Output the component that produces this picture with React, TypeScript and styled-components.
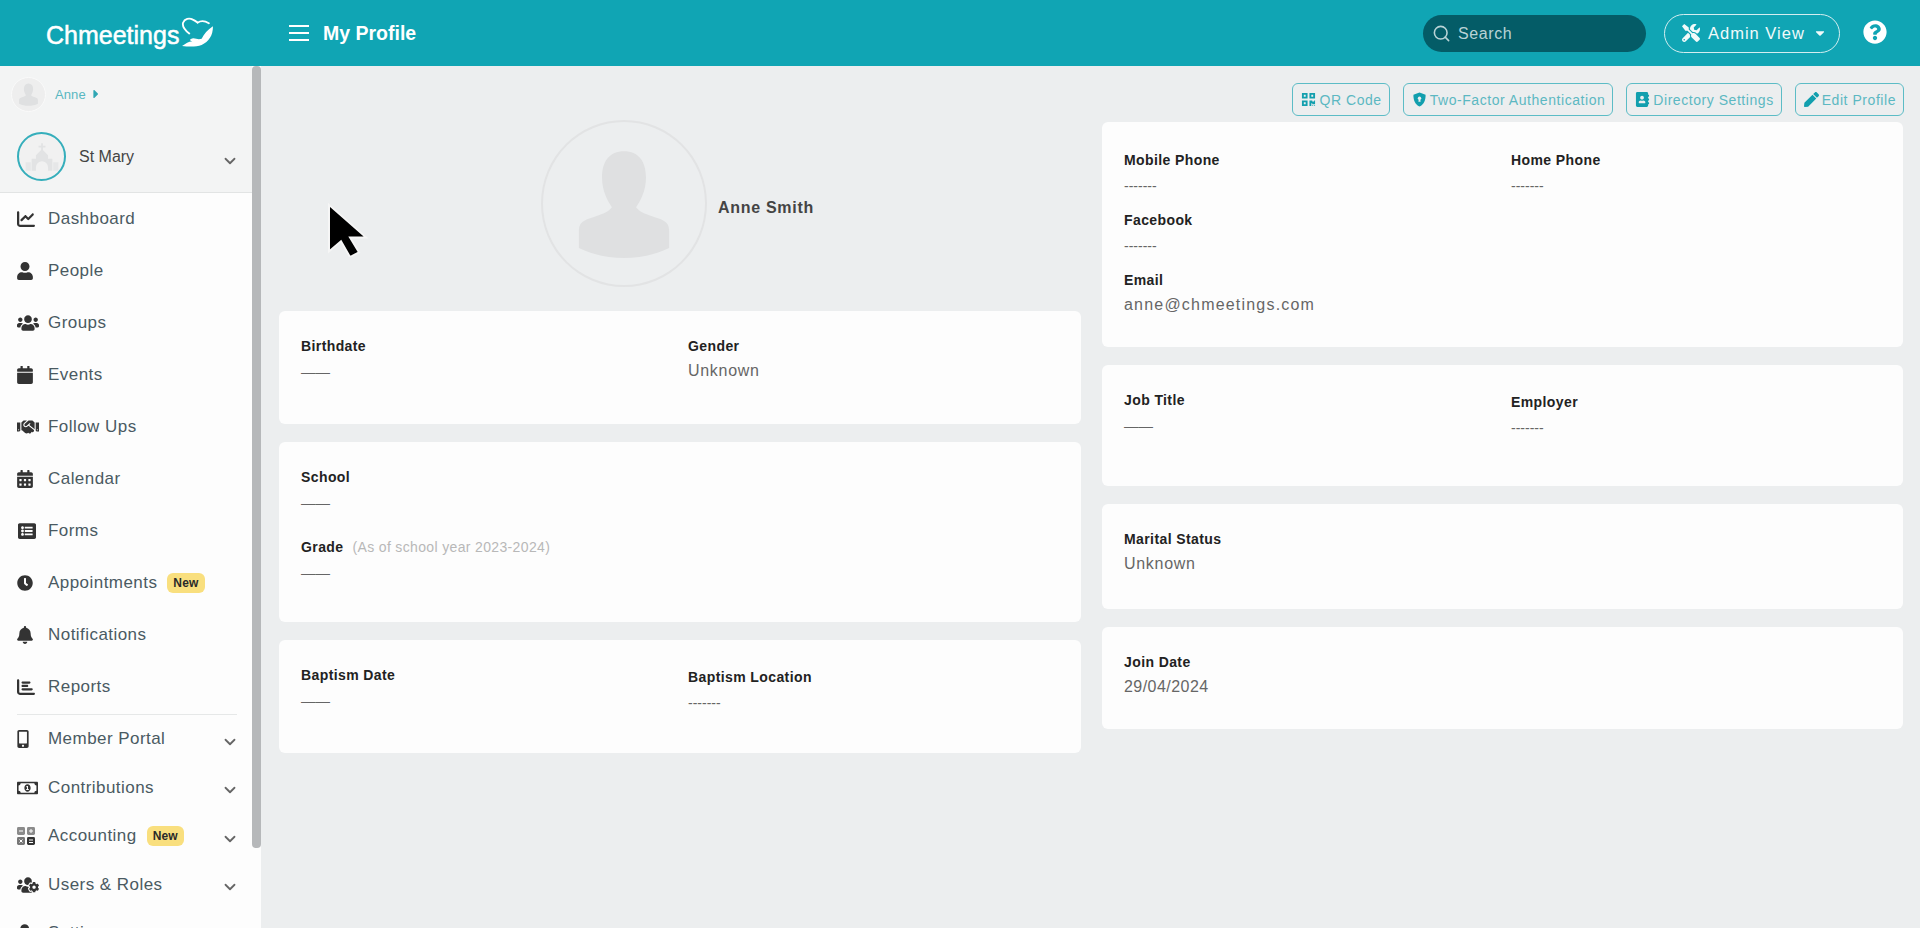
import React from 'react';
import styled, { createGlobalStyle } from 'styled-components';
import {
  FaUser, FaUsers, FaCalendar, FaHandshake, FaCalendarAlt, FaListAlt, FaClock, FaBell,
  FaMobileAlt, FaRegMoneyBillAlt, FaUsersCog, FaUserCog, FaTools, FaCaretDown, FaCaretRight,
  FaQuestionCircle, FaAddressBook, FaPen, FaQrcode,
} from 'react-icons/fa';
import { FaChartBar, FaChartLine } from 'react-icons/fa6';
import { FiSearch, FiChevronDown } from 'react-icons/fi';

const Global = createGlobalStyle`
  html, body { margin: 0; padding: 0; height: 928px; overflow: hidden; background: #eceeef; }
  * { box-sizing: border-box; }
  body { font-family: "Liberation Sans", Arial, sans-serif; }
`;

const Page = styled.div`
  position: relative;
  width: 1920px;
  height: 928px;
  overflow: hidden;
  display: flex;
  flex-direction: column;
`;

const Header = styled.header`
  height: 66px;
  flex: none;
  background: #10a5b4;
  display: flex;
  align-items: center;
  color: #fff;
`;

const Logo = styled.div`
  width: 289px;
  padding-left: 46px;
  display: flex;
  align-items: center;
  gap: 2px;
`;

const LogoText = styled.span`
  font-size: 25px;
  font-weight: 400;
  -webkit-text-stroke: 0.5px #fff;
  margin-top: 5px;
`;

const Burger = styled.button`
  width: 20px;
  height: 16px;
  padding: 0;
  border: none;
  background: none;
  display: flex;
  flex-direction: column;
  justify-content: space-between;
  margin-right: 14px;
  span { display: block; height: 2px; background: #fff; }
`;

const PageTitle = styled.h1`
  margin: 0;
  font-size: 19.5px;
  font-weight: 700;
  color: #fff;
`;

const HeaderRight = styled.div`
  margin-left: auto;
  display: flex;
  align-items: center;
  padding-right: 33px;
`;

const Search = styled.div`
  width: 223px;
  height: 37px;
  border-radius: 19px;
  background: #045c67;
  display: flex;
  align-items: center;
  padding-left: 9px;
  gap: 7px;
  color: #b9d3d6;
  font-size: 16px;
  letter-spacing: 0.6px;
`;

const SearchText = styled.span`
  margin-top: 2px;
`;

const AdminButton = styled.div`
  width: 176px;
  height: 39px;
  margin-left: 18px;
  border: 1px solid #d3eef0;
  border-radius: 20px;
  display: flex;
  align-items: center;
  padding-left: 17px;
  gap: 8px;
  font-size: 16.5px;
  letter-spacing: 1px;
  color: #f1fafa;
`;

const AdminText = styled.span`
  margin-top: 1px;
`;

const HelpIcon = styled(FaQuestionCircle)`
  margin: -2px 0 0 23px;
  width: 24px;
  height: 24px;
  color: #fff;
`;

const Body = styled.div`
  flex: 1;
  display: flex;
  min-height: 0;
`;

const Sidebar = styled.aside`
  width: 261px;
  flex: none;
  display: flex;
  background: #fdfdfd;
  overflow: hidden;
`;

const SideContent = styled.div`
  width: 252px;
  flex: none;
`;

const ScrollThumb = styled.div`
  width: 9px;
  height: 782px;
  background: #b6b8ba;
  border-radius: 4px;
`;

const SideTop = styled.div`
  height: 127px;
  background: #f3f4f4;
  border-bottom: 1px solid #e2e4e4;
`;

const UserRow = styled.div`
  height: 46px;
  padding: 10px 0 0 11px;
  display: flex;
  align-items: center;
  gap: 9px;
  color: #58b7c1;
  font-size: 13px;
  letter-spacing: 0.1px;
`;

const UserAvatar = styled.div`
  width: 35px;
  height: 35px;
  border-radius: 50%;
  background: #eeeeee;
  border: 1px solid #fafafa;
  display: flex;
  align-items: center;
  justify-content: center;
`;

const UserCaret = styled(FaCaretRight)`
  margin-left: -6px;
  width: 14px;
  height: 14px;
  color: #2fa6b3;
`;

const ChurchRow = styled.div`
  display: flex;
  align-items: center;
  padding: 20px 15px 0 17px;
  gap: 13px;
  font-size: 16px;
  color: #444;
`;

const ChurchAvatar = styled.div`
  width: 49px;
  height: 49px;
  border-radius: 50%;
  border: 2px solid #35aebb;
  background: #f1f1f1;
  display: flex;
  align-items: center;
  justify-content: center;
`;

const Chevron = styled(FiChevronDown)<{ $drop: number }>`
  margin-left: auto;
  margin-right: -2px;
  width: 18px;
  height: 18px;
  color: #666;
  stroke-width: 2.4;
  margin-top: ${p => p.$drop}px;
  flex: none;
`;

const NavList = styled.nav`
  display: flex;
  flex-direction: column;
`;

const NavRow = styled.a<{ $height: number }>`
  height: ${p => p.$height}px;
  flex: none;
  display: flex;
  align-items: center;
  padding: 0 15px 0 17px;
  font-size: 17px;
  letter-spacing: 0.45px;
  color: #4a5a62;
  white-space: nowrap;
`;

const NavIcon = styled.span<{ $width: number }>`
  width: 31px;
  flex: none;
  display: flex;
  align-items: center;
  svg { width: ${p => p.$width}px; height: 18px; color: #333; }
`;

const NewBadge = styled.span`
  margin-left: 10px;
  background: #f9df7e;
  color: #2a2a2a;
  font-size: 12px;
  font-weight: 700;
  letter-spacing: 0.2px;
  height: 20px;
  line-height: 20px;
  padding: 0 6px;
  border-radius: 6px;
`;

const Divider = styled.hr`
  margin: 1px 15px 0 17px;
  border: none;
  border-top: 1px solid #e6e8e8;
  height: 0;
  flex: none;
`;

const Main = styled.main`
  flex: 1;
  display: grid;
  grid-template-columns: 802px 801px;
  column-gap: 21px;
  padding-left: 18px;
  align-content: start;
`;

const Column = styled.div`
  display: flex;
  flex-direction: column;
  gap: 18px;
`;

const Hero = styled.div`
  height: 227px;
  padding: 54px 0 0 262px;
  display: flex;
  align-items: flex-start;
  gap: 11px;
`;

const BigAvatar = styled.div`
  width: 166px;
  height: 167px;
  border-radius: 50%;
  border: 2px solid #e2e3e4;
  display: flex;
  align-items: center;
  justify-content: center;
  flex: none;
`;

const HeroName = styled.div`
  margin-top: 79px;
  font-size: 16px;
  font-weight: 700;
  letter-spacing: 0.7px;
  color: #444;
`;

const Toolbar = styled.div`
  display: flex;
  justify-content: flex-end;
  gap: 13px;
  padding-top: 17px;
  margin-bottom: -12px;
  height: 50px;
  margin-right: -1px;
`;

const ToolButton = styled.a`
  height: 33px;
  border: 1px solid #5cbcc6;
  border-radius: 6px;
  padding: 0 7px 0 8px;
  display: flex;
  align-items: center;
  gap: 3px;
  color: #5cb8c2;
  font-size: 14px;
  letter-spacing: 0.55px;
  white-space: nowrap;
  svg { width: 15px; height: 15px; color: #129fae; }
`;

const Card = styled.section<{ $height: number; $top?: number; $rowGap?: number }>`
  height: ${p => p.$height}px;
  background: #fdfdfd;
  border-radius: 6px;
  padding: ${p => p.$top ?? 26}px 22px 0;
  display: grid;
  grid-template-columns: 387px 1fr;
  align-content: start;
  row-gap: ${p => p.$rowGap ?? 18}px;
`;

const Field = styled.div<{ $wide?: boolean; $shift?: number }>`
  ${p => (p.$wide ? 'grid-column: 1 / -1;' : '')}
  margin-top: ${p => p.$shift ?? 0}px;
`;

const Label = styled.div`
  font-size: 14px;
  line-height: 18px;
  font-weight: 700;
  color: #222;
  letter-spacing: 0.4px;
`;

const Hint = styled.span`
  margin-left: 9px;
  font-weight: 400;
  color: #b8b8b8;
  letter-spacing: 0.35px;
`;

const Value = styled.div<{ $spacing?: number }>`
  margin-top: 6px;
  font-size: 16px;
  line-height: 20px;
  color: #666;
  letter-spacing: ${p => p.$spacing ?? 0.7}px;
`;

const Dash = styled.div<{ $wide?: boolean }>`
  margin-top: 7px;
  font-size: ${p => (p.$wide ? 14 : 14.5)}px;
  line-height: 20px;
  height: 20px;
  color: #666;
  letter-spacing: 0;
  white-space: nowrap;
`;

const Cursor = styled.svg`
  position: absolute;
  left: 327px;
  top: 203px;
  width: 42px;
  height: 54px;
`;

const Silhouette = styled.svg<{ $size: number }>`
  width: ${p => p.$size}px;
  height: ${p => p.$size}px;
`;

const Sil = ({ size }: { size: number }) => (
  <Silhouette $size={size} viewBox="0 0 100 100">
    <path d="M50 2c13 0 20 9 20 24 0 12-5 21-9 27 3 4 8 6 14 8 8 3 16 4 16 13v16c-12 6-26 9-41 9s-29-3-41-9V74c0-9 8-10 16-13 6-2 11-4 14-8-4-6-9-15-9-27C30 11 37 2 50 2z" fill="#dfe0e1" />
  </Silhouette>
);

const Church = () => (
  <svg viewBox="0 0 44 44" width="38" height="38">
    <path d="M21 6h2v3h3v2h-3v3l6 6v4h5v14h-5v-4a7 7 0 0 0-14 0v4h-5V24h5v-4l6-6v-3h-3V9h3z" fill="#e2e3e4" />
    <path d="M3 28h6v10H3zM35 28h6v10h-6z" fill="#e6e7e8" />
  </svg>
);

const AccountingIcon = () => (
  <svg viewBox="0 0 18 18">
    <rect x="0" y="0" width="8" height="8" rx="1.4" fill="#8b8b8b" />
    <rect x="10" y="0" width="8" height="8" rx="1.4" fill="#8b8b8b" />
    <rect x="0" y="10" width="8" height="8" rx="1.4" fill="#777" />
    <rect x="10" y="10" width="8" height="8" rx="1.4" fill="#333" />
    <path d="M2 4h4M12 4h4M14 2v4M2.500 12.500l3 3M5.500 12.500l-3 3M12 13h4M12 15.500h4" stroke="#fff" strokeWidth="1" />
  </svg>
);

const ShieldIcon = () => (
  <svg viewBox="0 0 16 16">
    <path d="M8 .5l6.500 2.400c.1 5.600-1.600 10.300-6.500 12.600C3.100 13.200 1.400 8.500 1.500 2.900z" fill="currentColor" />
    <circle cx="8" cy="6.700" r="1.800" fill="#eceeef" />
    <path d="M7.200 7.500h1.600l.4 3H6.800z" fill="#eceeef" />
  </svg>
);

const HeartLogo = () => (
  <svg viewBox="0 0 32 30" width="33" height="31" style={{ marginBottom: 2 }}>
    <path d="M8 16C3 12 1 9 2 5.500 3.500 1.500 8 .5 11.500 2.500 13.500 3.500 15 4.500 16 5.500 19 3.500 23 3.500 27 6" fill="none" stroke="#fff" strokeWidth="1.800" strokeLinecap="round" />
    <path d="M31 9C31 18 27 24 20 27 15 29 8 29 1 28 5 25.500 7 24 11 23.500 8 23 8 21 12 20.500 15 21 17 22 20 21 22 17 26 12 31 9z" fill="#fff" />
  </svg>
);

type Item = { icon: React.ReactNode; width: number; label: string; badge?: boolean; chevron?: boolean };

const primary: Item[] = [
  { icon: <FaChartLine />, width: 18, label: 'Dashboard' },
  { icon: <FaUser />, width: 16, label: 'People' },
  { icon: <FaUsers />, width: 22, label: 'Groups' },
  { icon: <FaCalendar />, width: 16, label: 'Events' },
  { icon: <FaHandshake />, width: 22, label: 'Follow Ups' },
  { icon: <FaCalendarAlt />, width: 16, label: 'Calendar' },
  { icon: <FaListAlt />, width: 20, label: 'Forms' },
  { icon: <FaClock />, width: 16, label: 'Appointments', badge: true },
  { icon: <FaBell />, width: 16, label: 'Notifications' },
  { icon: <FaChartBar />, width: 18, label: 'Reports' },
];

const secondary: Item[] = [
  { icon: <FaMobileAlt />, width: 12, label: 'Member Portal', chevron: true },
  { icon: <FaRegMoneyBillAlt />, width: 21, label: 'Contributions', chevron: true },
  { icon: <AccountingIcon />, width: 18, label: 'Accounting', badge: true, chevron: true },
  { icon: <FaUsersCog />, width: 22, label: 'Users & Roles', chevron: true },
  { icon: <FaUserCog />, width: 22, label: 'Settings', chevron: true },
];

const NavLine = ({ item, height }: { item: Item; height: number }) => (
  <NavRow $height={height}>
    <NavIcon $width={item.width}>{item.icon}</NavIcon>
    {item.label}
    {item.badge && <NewBadge>New</NewBadge>}
    {item.chevron && <Chevron $drop={5} />}
  </NavRow>
);

const SHORT = '——';
const LONG = '-------';

export default function App() {
  return (
    <Page>
      <Global />
      <Header>
        <Logo>
          <LogoText>Chmeetings</LogoText>
          <HeartLogo />
        </Logo>
        <Burger aria-label="Menu"><span /><span /><span /></Burger>
        <PageTitle>My Profile</PageTitle>
        <HeaderRight>
          <Search><FiSearch size={19} /><SearchText>Search</SearchText></Search>
          <AdminButton>
            <FaTools size={18} />
            <AdminText>Admin View</AdminText>
            <FaCaretDown size={14} />
          </AdminButton>
          <HelpIcon />
        </HeaderRight>
      </Header>
      <Body>
        <Sidebar>
          <SideContent>
            <SideTop>
              <UserRow>
                <UserAvatar><Sil size={23} /></UserAvatar>
                <span>Anne</span>
                <UserCaret />
              </UserRow>
              <ChurchRow>
                <ChurchAvatar><Church /></ChurchAvatar>
                St Mary
                <Chevron $drop={9} />
              </ChurchRow>
            </SideTop>
            <NavList>
              {primary.map(i => <NavLine key={i.label} item={i} height={52} />)}
              <Divider />
              {secondary.map(i => <NavLine key={i.label} item={i} height={48.5} />)}
            </NavList>
          </SideContent>
          <ScrollThumb />
        </Sidebar>
        <Main>
          <Column>
            <Hero>
              <BigAvatar><Sil size={110} /></BigAvatar>
              <HeroName>Anne Smith</HeroName>
            </Hero>
            <Card $height={113}>
              <Field><Label>Birthdate</Label><Dash>{SHORT}</Dash></Field>
              <Field><Label>Gender</Label><Value>Unknown</Value></Field>
            </Card>
            <Card $height={180} $rowGap={25}>
              <Field $wide><Label>School</Label><Dash>{SHORT}</Dash></Field>
              <Field $wide>
                <Label>Grade<Hint>(As of school year 2023-2024)</Hint></Label>
                <Dash>{SHORT}</Dash>
              </Field>
            </Card>
            <Card $height={113}>
              <Field><Label>Baptism Date</Label><Dash>{SHORT}</Dash></Field>
              <Field $shift={2}><Label>Baptism Location</Label><Dash $wide>{LONG}</Dash></Field>
            </Card>
          </Column>
          <Column>
            <Toolbar>
              <ToolButton><FaQrcode />QR Code</ToolButton>
              <ToolButton><ShieldIcon />Two-Factor Authentication</ToolButton>
              <ToolButton><FaAddressBook />Directory Settings</ToolButton>
              <ToolButton><FaPen />Edit Profile</ToolButton>
            </Toolbar>
            <Card $height={225} $top={29} $rowGap={15}>
              <Field><Label>Mobile Phone</Label><Dash $wide>{LONG}</Dash></Field>
              <Field><Label>Home Phone</Label><Dash $wide>{LONG}</Dash></Field>
              <Field $wide><Label>Facebook</Label><Dash $wide>{LONG}</Dash></Field>
              <Field $wide><Label>Email</Label><Value $spacing={1.2}>anne@chmeetings.com</Value></Field>
            </Card>
            <Card $height={121}>
              <Field><Label>Job Title</Label><Dash>{SHORT}</Dash></Field>
              <Field $shift={2}><Label>Employer</Label><Dash $wide>{LONG}</Dash></Field>
            </Card>
            <Card $height={105}>
              <Field $wide><Label>Marital Status</Label><Value>Unknown</Value></Field>
            </Card>
            <Card $height={102}>
              <Field $wide><Label>Join Date</Label><Value $spacing={0.45}>29/04/2024</Value></Field>
            </Card>
          </Column>
        </Main>
      </Body>
      <Cursor viewBox="0 0 42 58" preserveAspectRatio="none">
        <path d="M2 2v50l12-11 9 17 9-5-9-16h16z" fill="#000" stroke="#f6f6f6" strokeWidth="2" />
      </Cursor>
    </Page>
  );
}
